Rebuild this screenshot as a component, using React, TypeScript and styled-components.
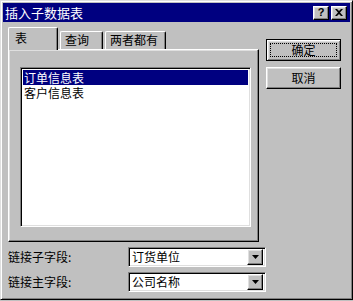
import React from 'react';
import styled, { createGlobalStyle } from 'styled-components';

const GlobalStyle = createGlobalStyle`
  html, body {
    margin: 0;
    padding: 0;
    background: #c0c0c0;
  }
  body {
    font-family: "Noto Sans CJK SC", "Noto Sans", sans-serif;
    font-size: 12px;
    color: #000;
  }
  * {
    box-sizing: border-box;
  }
`;

const raised = `
  border-top: 1px solid #fff;
  border-left: 1px solid #fff;
  border-right: 1px solid #000;
  border-bottom: 1px solid #000;
  box-shadow: inset -1px -1px #808080, inset 1px 1px #dfdfdf;
`;

const sunken = `
  border-top: 1px solid #808080;
  border-left: 1px solid #808080;
  border-right: 1px solid #fff;
  border-bottom: 1px solid #fff;
  box-shadow: inset 1px 1px #000, inset -1px -1px #dfdfdf;
`;

const tabs = ['表', '查询', '两者都有'];
const tables = ['订单信息表', '客户信息表'];
const fields = [
  { label: '链接子字段:', value: '订货单位' },
  { label: '链接主字段:', value: '公司名称' },
];

export default function App() {
  return (
    <>
      <GlobalStyle />
      <Window>
        <TitleBar>
          <Title>插入子数据表</Title>
          <TitleButtons>
            <TitleButton>?</TitleButton>
            <TitleButton>
              <svg width="8" height="7" viewBox="0 0 8 7">
                <path d="M0 0h2l2 2 2-2h2L5 3.5 8 7H6L4 5 2 7H0l3-3.5z" fill="#000" />
              </svg>
            </TitleButton>
          </TitleButtons>
        </TitleBar>

        <Main>
          <LeftColumn>
            <TabRow>
              {tabs.map((t, i) => (
                <Tab key={t} $active={i === 0} $width={[50, 43, 61][i]}>
                  {t}
                </Tab>
              ))}
            </TabRow>
            <TabPanel>
              <ListBox>
                {tables.map((t, i) => (
                  <ListItem key={t} $selected={i === 0}>
                    {t}
                  </ListItem>
                ))}
              </ListBox>
            </TabPanel>
          </LeftColumn>

          <ButtonColumn>
            <DefaultButton>
              <FocusRing>确定</FocusRing>
            </DefaultButton>
            <Button>取消</Button>
          </ButtonColumn>
        </Main>

        <Fields>
          {fields.map((f) => (
            <FieldRow key={f.label}>
              <FieldLabel>{f.label}</FieldLabel>
              <Combo>
                <ComboValue>{f.value}</ComboValue>
                <ComboButton>
                  <svg width="7" height="4" viewBox="0 0 7 4">
                    <path d="M0 0h7L3.5 4z" fill="#000" />
                  </svg>
                </ComboButton>
              </Combo>
            </FieldRow>
          ))}
        </Fields>
      </Window>
    </>
  );
}

const Window = styled.div`
  width: 353px;
  height: 300px;
  padding: 2px;
  background: #c0c0c0;
  border-top: 1px solid #dfdfdf;
  border-left: 1px solid #dfdfdf;
  border-right: 1px solid #000;
  border-bottom: 1px solid #000;
  box-shadow: inset 1px 1px #fff, inset -1px -1px #808080;
  display: flex;
  flex-direction: column;
`;

const TitleBar = styled.div`
  height: 19px;
  background: #000080;
  display: flex;
  align-items: center;
  justify-content: space-between;
  padding: 0 3px 0 2px;
`;

const Title = styled.span`
  color: #fff;
  font-size: 13px;
  line-height: 19px;
`;

const TitleButtons = styled.div`
  display: flex;
  gap: 2px;
`;

const TitleButton = styled.div`
  width: 16px;
  height: 14px;
  background: #c0c0c0;
  ${raised}
  display: flex;
  align-items: center;
  justify-content: center;
  font-family: "Liberation Sans", sans-serif;
  font-weight: bold;
  font-size: 11px;
  line-height: 1;
`;

const Main = styled.div`
  display: flex;
  padding: 6px 0 0 5px;
`;

const LeftColumn = styled.div`
  display: flex;
  flex-direction: column;
  width: 251px;
`;

const TabRow = styled.div`
  display: flex;
  align-items: flex-end;
  height: 22px;
  position: relative;
  z-index: 1;
  margin-bottom: -1px;
`;

const Tab = styled.div<{ $active: boolean; $width: number }>`
  width: ${(p) => p.$width}px;
  height: ${(p) => (p.$active ? 23 : 18)}px;
  margin-left: ${(p) => (p.$active ? 0 : 2)}px;
  margin-bottom: ${(p) => (p.$active ? 0 : 1)}px;
  background: #c0c0c0;
  border-top: 1px solid #fff;
  border-left: 1px solid #fff;
  border-right: 1px solid #000;
  box-shadow: inset -1px 0 #808080;
  border-radius: 2px 2px 0 0;
  padding: ${(p) => (p.$active ? '3px 0 0 6px' : '1px 0 0 4px')};
  line-height: 14px;
`;

const TabPanel = styled.div`
  height: 193px;
  ${raised}
  padding: 17px 0 0 11px;
`;

const ListBox = styled.div`
  width: 231px;
  height: 160px;
  background: #fff;
  ${sunken}
  padding: 2px;
`;

const ListItem = styled.div<{ $selected: boolean }>`
  height: 15px;
  line-height: 15px;
  padding-left: 1px;
  background: ${(p) => (p.$selected ? '#000080' : 'transparent')};
  color: ${(p) => (p.$selected ? '#fff' : '#000')};
`;

const ButtonColumn = styled.div`
  display: flex;
  flex-direction: column;
  gap: 6px;
  margin: 11px 0 0 7px;
`;

const Button = styled.div`
  width: 75px;
  height: 22px;
  background: #c0c0c0;
  ${raised}
  display: flex;
  align-items: center;
  justify-content: center;
  line-height: 14px;
`;

const DefaultButton = styled(Button)`
  border: 1px solid #000;
  box-shadow: inset 1px 1px #fff, inset -1px -1px #808080, inset 2px 2px #dfdfdf;
  padding: 3px;
`;

const FocusRing = styled.div`
  flex: 1;
  align-self: stretch;
  border: 1px dotted #000;
  display: flex;
  align-items: center;
  justify-content: center;
`;

const Fields = styled.div`
  display: flex;
  flex-direction: column;
  gap: 5px;
  padding: 5px 0 0 5px;
`;

const FieldRow = styled.div`
  display: flex;
  align-items: center;
`;

const FieldLabel = styled.span`
  width: 120px;
  line-height: 14px;
`;

const Combo = styled.div`
  width: 138px;
  height: 20px;
  background: #fff;
  ${sunken}
  display: flex;
  align-items: center;
  padding: 2px;
`;

const ComboValue = styled.span`
  flex: 1;
  padding-left: 1px;
  line-height: 14px;
`;

const ComboButton = styled.div`
  width: 16px;
  height: 16px;
  background: #c0c0c0;
  ${raised}
  display: flex;
  align-items: center;
  justify-content: center;
`;
